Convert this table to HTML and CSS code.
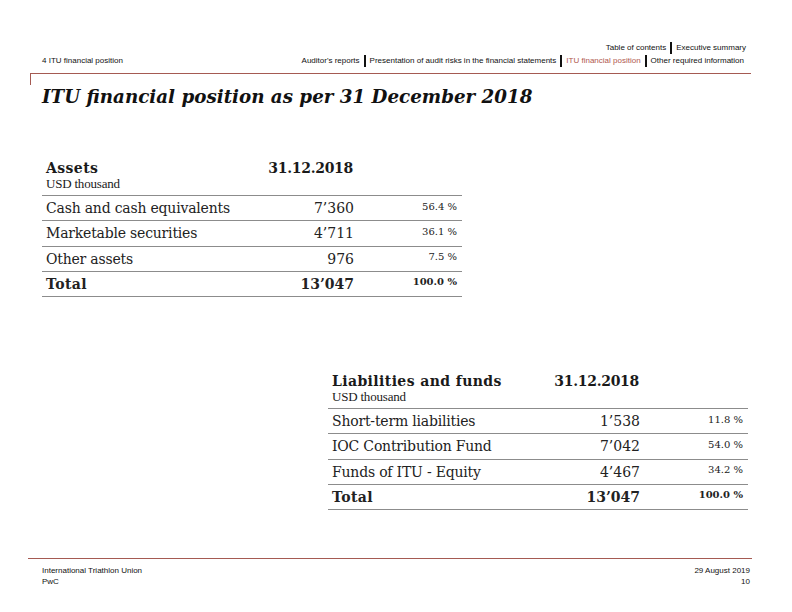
FILE: index.html
```html
<!DOCTYPE html>
<html>
<head>
<meta charset="utf-8">
<link rel="stylesheet" href="styles.css">
</head>
<body>
<div class="page">
  <header class="top">
    <div class="crumb">4 ITU financial position</div>
    <nav class="nav">
      <div class="nav-line">Table of contents<span class="sep"></span>Executive summary</div>
      <div class="nav-line">Auditor's reports<span class="sep"></span>Presentation of audit risks in the financial statements<span class="sep"></span><span class="active">ITU financial position</span><span class="sep"></span>Other required information</div>
    </nav>
  </header>
  <div class="rule"></div>
  <h1 class="title">ITU financial position as per 31 December 2018</h1>

  <section class="fin fin-assets">
    <div class="fin-head">
      <div class="head-label">
        <div class="head-name">Assets</div>
        <div class="head-unit">USD thousand</div>
      </div>
      <div class="head-date">31.12.2018</div>
      <div></div>
    </div>
    <div class="fin-row"><div class="lbl">Cash and cash equivalents</div><div class="val">7’360</div><div class="pct">56.4 %</div></div>
    <div class="fin-row"><div class="lbl">Marketable securities</div><div class="val">4’711</div><div class="pct">36.1 %</div></div>
    <div class="fin-row"><div class="lbl">Other assets</div><div class="val">976</div><div class="pct">7.5 %</div></div>
    <div class="fin-row total"><div class="lbl">Total</div><div class="val">13’047</div><div class="pct">100.0 %</div></div>
  </section>

  <section class="fin fin-liab">
    <div class="fin-head">
      <div class="head-label">
        <div class="head-name">Liabilities and funds</div>
        <div class="head-unit">USD thousand</div>
      </div>
      <div class="head-date">31.12.2018</div>
      <div></div>
    </div>
    <div class="fin-row"><div class="lbl">Short-term liabilities</div><div class="val">1’538</div><div class="pct">11.8 %</div></div>
    <div class="fin-row"><div class="lbl">IOC Contribution Fund</div><div class="val">7’042</div><div class="pct">54.0 %</div></div>
    <div class="fin-row"><div class="lbl">Funds of ITU - Equity</div><div class="val">4’467</div><div class="pct">34.2 %</div></div>
    <div class="fin-row total"><div class="lbl">Total</div><div class="val">13’047</div><div class="pct">100.0 %</div></div>
  </section>

  <footer class="foot">
    <div class="foot-left">
      <div>International Triathlon Union</div>
      <div>PwC</div>
    </div>
    <div class="foot-right">
      <div>29 August 2019</div>
      <div>10</div>
    </div>
  </footer>
</div>
</body>
</html>
```

FILE: styles.css
```css
html, body {
  margin: 0;
  padding: 0;
  background: #ffffff;
}

.page {
  width: 792px;
  height: 612px;
  overflow: hidden;
  color: #1a1a1a;
  font-family: "DejaVu Serif", serif;
}

.top {
  display: flex;
  justify-content: space-between;
  align-items: flex-end;
  padding: 41px 46px 0 42px;
  font-family: "Liberation Sans", sans-serif;
  font-size: 8px;
  line-height: 13px;
  color: #111;
}

.nav {
  text-align: right;
}

.nav-line {
  display: flex;
  justify-content: flex-end;
  align-items: center;
  white-space: nowrap;
}

.nav-line + .nav-line {
  margin-right: 2px;
}

.sep {
  display: inline-block;
  width: 2px;
  height: 12px;
  background: #111;
  margin: 0 4px;
}

.active {
  color: #b0574f;
}

.rule {
  margin: 6px 41px 0 30px;
  height: 11px;
  border-top: 1px solid #a55a52;
  border-left: 1px solid #a55a52;
}

.title {
  margin: 0 0 0 42px;
  font-family: "DejaVu Serif", serif;
  font-style: italic;
  font-weight: bold;
  font-size: 18.3px;
  line-height: 24px;
  color: #111;
}

.fin {
  width: 420px;
}

.fin-assets {
  margin: 50px 0 0 42px;
}

.fin-liab {
  margin: 75px 0 0 328px;
}

.fin-head,
.fin-row {
  display: grid;
  grid-template-columns: 226px 86px 1fr;
}

.fin-head {
  height: 36px;
  border-bottom: 1px solid #8c8c8c;
}

.head-label {
  padding-left: 4px;
}

.head-name {
  font-weight: bold;
  font-size: 14px;
  line-height: 18px;
  letter-spacing: 0.4px;
}

.head-unit {
  font-family: "Liberation Serif", serif;
  font-size: 13px;
  line-height: 14px;
  letter-spacing: -0.2px;
}

.head-date {
  font-weight: bold;
  font-size: 14px;
  line-height: 18px;
  letter-spacing: -0.3px;
  text-align: right;
  padding-right: 1px;
}

.fin-row {
  height: 24.25px;
  align-items: center;
  border-bottom: 1px solid #8c8c8c;
  font-size: 14px;
  font-weight: normal;
  color: #222;
}

.lbl {
  padding-left: 4px;
  white-space: nowrap;
  letter-spacing: -0.2px;
}

.val {
  text-align: right;
}

.pct {
  text-align: right;
  font-size: 10px;
  padding: 0 5px 4px 0;
  white-space: nowrap;
}

.total .lbl {
  font-weight: bold;
  letter-spacing: 0.4px;
}

.total .val {
  font-weight: bold;
}

.total .pct {
  font-weight: bold;
}

.foot {
  display: flex;
  justify-content: space-between;
  margin: 48px 40px 0 28px;
  padding: 6px 2px 0 14px;
  border-top: 1px solid #a55a52;
  font-family: "Liberation Sans", sans-serif;
  font-size: 8px;
  line-height: 11px;
  color: #111;
}

.foot-right {
  text-align: right;
}
```
